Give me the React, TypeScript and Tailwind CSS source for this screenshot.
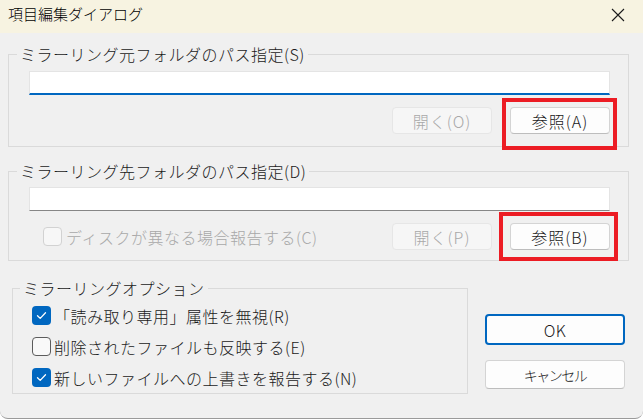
import React from "react";

function Check({ checked, disabled }: { checked?: boolean; disabled?: boolean }) {
  if (checked) {
    return (
      <span className="flex h-[19px] w-[19px] shrink-0 items-center justify-center rounded-[4px] bg-[#0067c0]">
        <svg width="13" height="13" viewBox="0 0 13 13" fill="none">
          <path d="M2.5 6.8 L5.2 9.4 L10.5 3.8" stroke="#ffffff" strokeWidth="1.3" strokeLinecap="round" strokeLinejoin="round" />
        </svg>
      </span>
    );
  }
  return (
    <span
      className={
        disabled
          ? "h-[19px] w-[19px] shrink-0 rounded-[4px] border border-[#d2d2d2] bg-[#f7f7f7]"
          : "h-[19px] w-[19px] shrink-0 rounded-[4px] border border-[#5c5c5c] bg-[#f9f9f9]"
      }
    />
  );
}

function Btn({ label, disabled }: { label: string; disabled?: boolean }) {
  return (
    <button
      className={
        disabled
          ? "flex h-[27px] w-[100px] items-center justify-center rounded-[4px] border border-[#e6e6e6] bg-[#f6f6f6] text-[16px] tracking-[1px] text-[#a8a8a8]"
          : "flex h-[27px] w-[100px] items-center justify-center rounded-[4px] border border-[#d4d4d4] border-b-[#bdbdbd] bg-[#fdfdfd] text-[16px] tracking-[1px] text-[#1a1a1a]"
      }
    >
      {label}
    </button>
  );
}

export default function App() {
  return (
    <div className="h-[419px] w-[643px] overflow-hidden bg-white font-['Noto_Sans_CJK_JP','Noto_Sans',sans-serif] text-[16px] font-light leading-5 tracking-[0.5px] text-[#1a1a1a]">
      <div className="flex h-[419px] flex-col overflow-hidden rounded-b-[8px] border-b border-[#9a9a9a] bg-[#f0f0f0]">
        {/* Title bar */}
        <div className="flex h-[33px] shrink-0 items-start justify-between bg-[#f7f3e1] pl-[8px] pr-[18px] pt-[4px]">
          <span className="text-[15px] tracking-normal text-black">項目編集ダイアログ</span>
          <svg width="14" height="14" viewBox="0 0 14 14" className="mt-[4px]">
            <path d="M1 1 L13 13 M13 1 L1 13" stroke="#1a1a1a" strokeWidth="1.1" />
          </svg>
        </div>

        {/* Source folder */}
        <fieldset className="ml-[8px] mr-[14px] mt-[11px] border border-[#dadada]">
          <legend className="ml-[8px] px-[3px] leading-5">ミラーリング元フォルダのパス指定(S)</legend>
          <div className="relative pb-[12px] pl-[20px] pr-[18px] pt-[7px]">
            <div className="h-[24px] border border-b-2 border-[#e4e4e4] border-b-[#0067c0] bg-white" />
            <div className="mt-[12px] flex justify-end gap-[18px]">
              <Btn label="開く(O)" disabled />
              <Btn label="参照(A)" />
            </div>
            <div className="absolute right-[11px] top-[34px] h-[52px] w-[115px] border-4 border-[#ec1c24]" />
          </div>
        </fieldset>

        {/* Destination folder */}
        <fieldset className="ml-[8px] mr-[14px] mt-[14px] border border-[#dadada]">
          <legend className="ml-[8px] px-[3px] leading-5">ミラーリング先フォルダのパス指定(D)</legend>
          <div className="relative pb-[10px] pl-[20px] pr-[18px] pt-[6px]">
            <div className="h-[24px] border border-[#e4e4e4] border-b-[#868686] bg-white" />
            <div className="mt-[12px] flex items-center">
              <div className="ml-[14px] flex items-center gap-[4px] text-[#a8a8a8]">
                <Check disabled />
                <span>ディスクが異なる場合報告する(C)</span>
              </div>
              <div className="ml-auto flex gap-[18px]">
                <Btn label="開く(P)" disabled />
                <Btn label="参照(B)" />
              </div>
            </div>
            <div className="absolute right-[10px] top-[31px] h-[49px] w-[119px] border-4 border-[#ec1c24]" />
          </div>
        </fieldset>

        {/* Options + OK/Cancel */}
        <div className="mt-[17px] flex items-start">
          <fieldset className="ml-[12px] w-[456px] border border-[#dadada]">
            <legend className="ml-[7px] px-[3px] leading-5">ミラーリングオプション</legend>
            <div className="flex flex-col pl-[19px] pt-[2px]">
              <div className="flex h-[31px] items-center gap-[3px]">
                <Check checked />
                <span>「読み取り専用」属性を無視(R)</span>
              </div>
              <div className="flex h-[31px] items-center gap-[3px]">
                <Check />
                <span>削除されたファイルも反映する(E)</span>
              </div>
              <div className="flex h-[31px] items-center gap-[3px]">
                <Check checked />
                <span>新しいファイルへの上書きを報告する(N)</span>
              </div>
            </div>
          </fieldset>
          <div className="ml-[17px] mt-[36px] flex w-[140px] flex-col">
            <button className="flex h-[31px] items-center justify-center rounded-[4px] border-2 border-[#0067c0] bg-[#fdfdfd] text-[16px]">
              OK
            </button>
            <button className="mt-[15px] flex h-[29px] items-center justify-center rounded-[4px] border border-[#d4d4d4] border-b-[#bdbdbd] bg-[#fdfdfd] text-[14px] tracking-[-1.5px]">
              キャンセル
            </button>
          </div>
        </div>
      </div>
    </div>
  );
}
